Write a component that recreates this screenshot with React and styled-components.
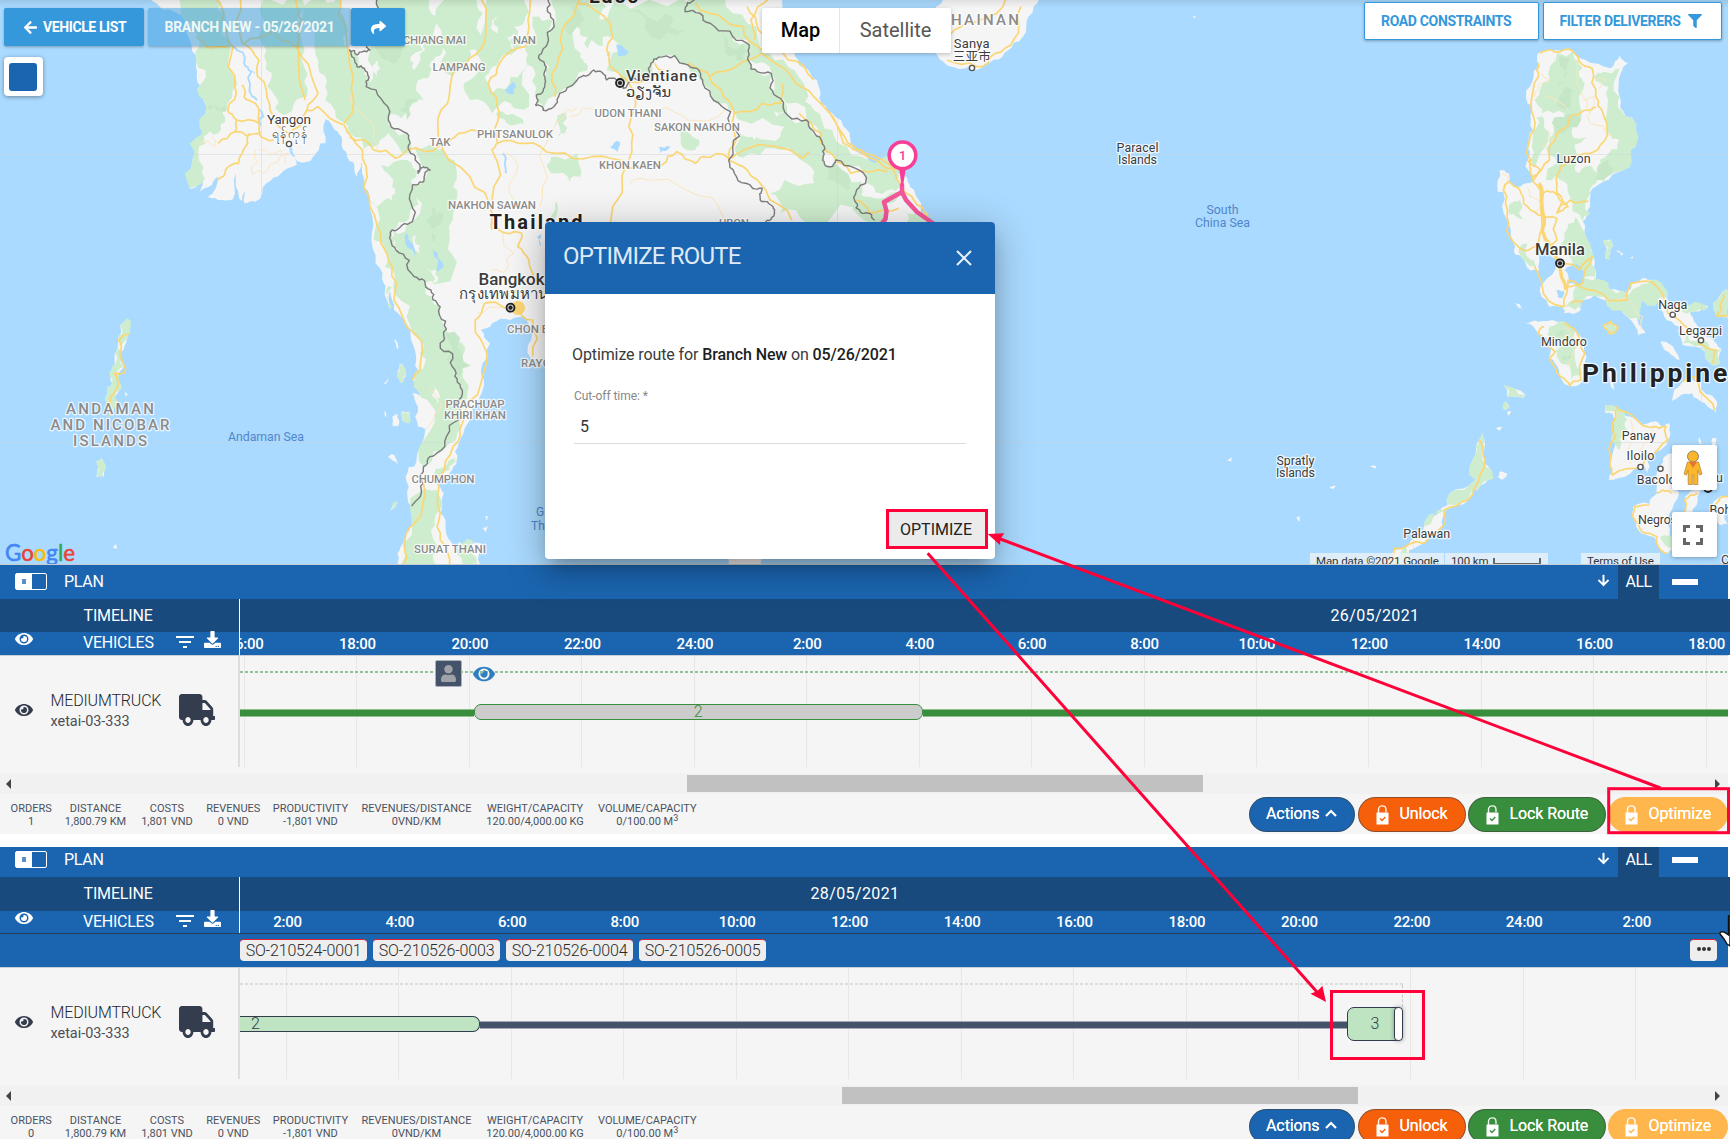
import React from "react";
import styled, { createGlobalStyle, css } from "styled-components";
import { FaArrowLeft, FaArrowDown, FaShare, FaFilter, FaEye, FaTruck, FaDownload, FaUser } from "react-icons/fa";
import { MdFilterList } from "react-icons/md";

const GlobalStyle = createGlobalStyle`
  * { box-sizing: border-box; }
  html, body { margin: 0; padding: 0; overflow: hidden; }
  body { font-family: Roboto, "Noto Sans", "Liberation Sans", sans-serif; color: #333c4b; background: #fff; }
  svg { display: block; flex: none; }
`;

/* ---------- map geometry ---------- */

const KX = 1 / 2.7034;
const KY = 1 / 3;

function hash(a, b) {
  const s = Math.sin(a * 12.9898 + b * 78.233) * 43758.5453;
  return s - Math.floor(s) - 0.5;
}

function roughen(pts, amp, depth) {
  let out = pts;
  for (let d = 0; d < depth; d++) {
    const next = [];
    for (let i = 0; i < out.length - 1; i++) {
      const [x1, y1] = out[i];
      const [x2, y2] = out[i + 1];
      const dx = x2 - x1;
      const dy = y2 - y1;
      const k = hash(x1 + y2, y1 + x2) * amp;
      next.push(out[i], [(x1 + x2) / 2 - dy * k, (y1 + y2) / 2 + dx * k]);
    }
    next.push(out[out.length - 1]);
    out = next;
  }
  return out;
}

function trace(str, amp = 0.35, depth = 2, closed = false, ox = 0, oy = 0) {
  const n = str.trim().split(/[\s,]+/).map(Number);
  const pts = [];
  for (let i = 0; i < n.length; i += 2) pts.push([(n[i] + ox) * KX, (n[i + 1] + oy) * KY]);
  if (closed) pts.push(pts[0]);
  return "M" + roughen(pts, amp, depth).map((p) => p[0].toFixed(1) + " " + p[1].toFixed(1)).join("L") + (closed ? "Z" : "");
}

const E = 3109;
const LAND = [
  ["405,-10 440,30 500,60 518,135 530,200 545,260 558,320 548,390 535,440 520,480 512,565 535,555 560,520 575,505 540,575 565,560 590,530 562,590 600,600 630,598 638,520 646,595 655,603 666,560 660,608 690,605 720,550 760,520 802,495 790,460 785,440 800,478 815,488 840,482 862,450 866,430 880,430 880,358 905,390 925,420 938,470 950,485 978,490 985,550 998,600 1005,700 1015,790 1040,855 1060,900 1085,950 1110,1010 1125,1070 1135,1120 1115,1140 1150,1160 1150,1190 1115,1180 1130,1220 1130,1280 1150,1290 1140,1340 1120,1400 1105,1400 1105,1460 1115,1520 1110,1580 1090,1630 1075,1660 1075,1720 1310,1720 1300,1630 1240,1625 1245,1670 1225,1640 1205,1590 1190,1540 1200,1480 1180,1450 1215,1420 1235,1380 1240,1330 1265,1270 1290,1210 1305,1170 1300,1110 1325,1030 1300,990 1330,970 1380,960 1420,955 1440,1000 1435,1075 1490,1110 1800,1200 2100,1400 2600,1000 2620,780 2530,680 2490,610 2460,560 2450,530 2400,508 2340,465 2300,430 2290,390 2250,340 2215,295 2208,240 2180,205 2150,170 2110,120 2100,60 2115,-10", 0, 0],
  ["2555,-10 2530,20 2520,60 2510,150 2550,185 2610,205 2640,210 2685,180 2710,170 2740,130 2765,110 2780,50 2810,-10", 0, 0],
  ["1973,1720 1975,1660 2055,1660 2045,1720", 0, 0],
  ["1050,160 1090,150 1130,145 1155,170 1200,190 1245,205 1270,165 1292,190 1272,220 1270,290 1285,350 1302,352 1315,395 1300,450 1280,510 1225,545 1190,580 1190,620 1170,665 1175,700 1195,770 1200,800 1220,870 1290,880 1300,850 1330,835 1360,840 1390,870 1400,900 1430,920 1490,910 1510,920 1460,935 1475,970 1530,1030 1545,1050 1540,1090 1515,1090 1500,1055 1440,1035 1430,980 1390,950 1370,900 1330,900 1310,940 1340,1000 1320,1008 1290,950 1260,900 1200,885 1170,900 1165,930 1120,940 1115,920 1080,920 1058,890 1055,860 1095,810 1100,785 1075,745 1050,760 1052,812 1030,812 1010,770 985,760 980,720 965,660 955,575 940,575 945,510 970,520 970,545 1000,560 1035,545 1015,500 1018,440 1035,390 1033,330 1020,310 1035,240 1050,190", E, 0],
  ["1015,130 1050,125 1100,125 1140,145 1165,170 1180,230 1165,310 1135,318 1105,270 1080,235 1085,200 1050,160", E, 840],
  ["1225,135 1243,123 1265,143 1243,163", E, 840],
  ["1410,365 1440,305 1490,310 1530,360 1530,400 1500,370 1465,340 1430,350", E, 840],
  ["1230,375 1260,380 1300,410 1330,435 1360,425 1385,440 1405,430 1405,470 1380,510 1345,545 1345,580 1335,560 1310,565 1250,600 1240,600 1245,550 1255,470 1250,400 1230,398", E, 840],
  ["1375,560 1390,530 1410,520 1430,560 1430,640 1405,700 1405,760 1410,810 1390,820 1370,790 1360,770 1320,750 1305,710 1305,680 1350,672 1370,640 1365,600", E, 840],
  ["1500,600 1520,600 1480,650 1465,700 1440,710 1445,660 1470,630", E, 840],
  ["1515,690 1540,650 1563,650 1563,735 1540,735", E, 840],
  ["900,460 905,500 905,550 928,595 895,615 860,660 800,690 790,740 740,790 700,810 690,860 635,860 660,810 720,770 780,700 810,640 880,600 880,520 890,480", E, 840],
  ["955,315 1015,345 1010,355 965,350", E, 840],
  ["960,365 972,380 958,390", E, 840],
  ["1545,40 1563,30 1563,115 1530,105", E, 840],
  ["345,115 350,160 340,190 325,215 335,260 320,300 310,350 300,400 290,380 290,340 303,310 300,270 310,220 320,180 325,135", 0, 840],
  ["260,545 275,535 285,560 280,590 260,590", 0, 840],
  ["1380,185 1400,190 1432,240 1410,225", E, 840],
  ["1225,720 1245,718 1250,740 1242,780 1230,770", E, 0],
  ["1260,752 1280,762 1275,768", E, 0],
  ["1295,772 1305,768 1305,776", E, 0],
  ["985,68 1000,72 1008,88 995,82", E, 840],
  ["945,575 965,580 955,598 940,590", E, 840],
  ["933,445 952,440 945,452", E, 840],
  ["965,395 975,392 970,410", E, 840],
  ["208,544 222,532 220,544", E, 840],
  ["485,624 503,617 495,626", E, 840],
  ["595,558 612,560 610,566", E, 840],
  ["396,712 404,706 404,725", E, 840],
  ["115,48 125,50 120,55", E, 0],
  ["1245,260 1260,262 1255,330 1246,320", E, 840],
  ["1520,475 1532,475 1528,500 1520,495", E, 840],
  ["1485,470 1495,490 1485,492", E, 840],
  ["1080,250 1098,285 1085,310 1075,280", 0, 840],
  ["1060,410 1075,400 1075,440 1062,438", 0, 840],
  ["1085,395 1108,395 1105,430 1090,425", 0, 840],
  ["1038,392 1044,400 1042,412", 0, 840],
  ["1035,315 1050,295 1042,312", 0, 840],
  ["1048,530 1060,522 1075,552 1060,540", 0, 840],
  ["1055,690 1075,665 1070,680", 0, 840],
  ["1310,710 1320,708 1316,722", 0, 840],
  ["1305,745 1320,738 1312,760", 0, 840],
  ["305,805 313,792 316,807", 0, 840],
  ["338,335 346,342 340,350", 0, 840],
  ["1048,0 1060,20 1055,100 1046,60", 0, 840],
  ["1068,175 1076,190 1074,208", 0, 840],
  ["955,485 975,488 965,530", 0, 0],
];

const GREEN = [
  ["470,-10 585,-10 612,60 625,140 634,230 615,310 608,350 590,400 550,410 558,430 550,500 530,560 512,565 520,480 548,400 558,320 545,250 530,180 540,130 500,60", 0, 0],
  ["715,-10 815,-10 812,100 822,200 830,290 790,330 768,345 745,290 735,220 720,150", 0, 0],
  ["855,-10 915,-10 935,70 945,150 985,205 990,260 1050,350 1100,400 1110,460 1050,400 1010,440 985,450 945,400 925,365 905,330 880,260 860,200 850,130", 0, 0],
  ["1010,-10 1165,-10 1185,50 1170,105 1195,160 1165,185 1160,230 1130,240 1145,300 1110,320 1090,370 1050,345 990,260 1000,150 1000,60", 0, 0],
  ["1200,0 1285,-10 1305,40 1300,130 1310,170 1270,150 1245,210 1225,230 1190,130", 0, 0],
  ["1320,-10 1425,-10 1420,50 1390,80 1410,140 1350,180 1330,230 1330,280 1380,230 1430,190 1430,320 1380,310 1330,340 1270,300 1255,250 1300,180 1305,90", 0, 0],
  ["1440,50 1495,60 1480,130 1462,180 1473,240 1450,285 1440,200 1420,150", 0, 0],
  ["1500,-10 1555,-10 1570,40 1520,130 1500,230 1520,250 1560,225 1550,260 1470,325 1450,300 1475,210", 0, 0],
  ["1120,440 1175,440 1205,470 1225,560 1240,620 1215,700 1220,760 1190,850 1140,850 1065,740 1060,690 1115,665 1115,555 1145,545 1163,510", 0, 0],
  ["1030,495 1100,480 1125,530 1112,560 1105,660 1060,690 1065,750 1150,860 1190,920 1200,980 1230,1010 1255,1060 1250,1130 1265,1170 1240,1260 1215,1330 1145,1400 1140,1330 1155,1200 1120,1140 1135,1060 1110,980 1065,880 1040,800 1010,720 1000,600 1020,620 1060,600 1060,560", 0, 0],
  ["1130,1480 1180,1470 1190,1530 1165,1590 1190,1640 1180,1700 1080,1700 1115,1570", 0, 0],
  ["1200,1400 1230,1375 1215,1410 1180,1440 1170,1430", 0, 0],
  ["1245,1630 1280,1625 1290,1690 1250,1690", 0, 0],
  ["1340,340 1400,350 1420,380 1370,370", 0, 0],
  ["1470,-10 1620,-10 1640,20 1620,60 1650,80 1640,130 1600,120 1590,200 1560,230 1520,270 1480,310 1485,200 1500,70", 0, 0],
  ["1660,-10 1850,-10 1900,60 1960,90 2020,130 2025,185 2085,220 2110,295 2180,360 2215,410 2225,470 2245,500 2260,480 2330,545 2310,600 2330,640 2365,670 2180,670 2110,640 2080,580 2120,540 2200,550 2180,490 2110,450 2030,460 1990,460 2000,400 2080,420 2120,380 2000,360 1980,330 1960,310 1900,250 1860,195 1780,172 1730,230 1690,250 1640,210 1660,120 1620,60", 0, 0],
  ["1870,-10 1960,-10 2020,70 2060,160 2130,200 2180,270 2200,330 2250,390 2290,440 2330,470 2430,530 2440,560 2400,570 2345,550 2270,480 2225,460 2215,400 2180,350 2110,290 2085,220 2025,180 2020,120 1930,80 1855,35", 0, 0],
  ["2320,560 2350,590 2430,575 2390,610 2390,670 2360,670 2310,600", 0, 0],
  ["2450,640 2500,630 2530,670 2450,670", 0, 0],
  ["1490,470 1560,460 1570,530 1540,545 1490,520", 0, 0],
  ["1508,345 1530,340 1528,400 1508,410", 0, 0],
  ["1500,610 1505,605 1500,670 1485,670", 0, 0],
  ["1830,390 1890,420 1880,450 1840,430", 0, 0],
  ["1100,160 1145,150 1155,180 1160,230 1175,250 1165,330 1140,400 1180,410 1150,480 1160,520 1195,500 1210,540 1190,580 1190,640 1170,665 1135,590 1120,545 1070,540 1100,490 1080,430 1090,380 1120,340 1060,340 1040,300 1080,240", E, 0],
  ["1225,215 1270,205 1270,290 1285,350 1302,352 1315,395 1300,450 1280,510 1225,545 1210,510 1240,460 1268,420 1240,400 1235,340 1240,260 1200,230", E, 0],
  ["1045,350 1065,360 1070,440 1040,500 1035,420", E, 0],
  ["975,610 1000,600 1020,670 990,650 970,640", E, 0],
  ["1120,700 1150,650 1175,700 1200,770 1200,800 1220,870 1180,830 1130,760", E, 0],
  ["1000,740 1030,710 1030,780 1045,800 1020,790", E, 0],
  ["1180,-5 1240,10 1260,40 1320,20 1370,0 1400,50 1330,60 1330,130 1290,110 1230,50 1170,60 1150,90 1120,85 1150,20", E, 840],
  ["1430,80 1490,70 1510,82 1460,95", E, 840],
  ["1440,150 1490,180 1545,210 1540,250 1515,250 1500,215 1440,190", E, 840],
  ["1080,140 1120,125 1145,170 1165,190 1170,280 1140,300 1100,230 1110,200 1080,170", E, 840],
  ["1225,135 1243,123 1265,143 1243,163", E, 840],
  ["1230,375 1262,385 1290,420 1290,450 1270,510 1262,500 1262,400 1230,398", E, 840],
  ["900,460 905,500 905,550 928,595 895,615 860,660 800,690 740,740 720,770 780,700 810,640 880,600 880,520 890,480", E, 840],
  ["640,860 690,800 700,830 690,860", E, 840],
  ["955,315 1015,345 1010,355 965,350", E, 840],
  ["960,365 972,380 958,390", E, 840],
  ["1545,40 1563,30 1563,115 1530,105", E, 840],
  ["1380,770 1405,765 1410,800 1390,790", E, 840],
  ["345,115 350,160 335,185 322,205 335,260 320,300 310,350 300,400 290,380 290,340 303,310 300,270 310,220 320,180 325,135", 0, 840],
  ["260,545 275,535 285,560 280,590 260,590", 0, 840],
  ["1225,720 1245,718 1250,740 1242,780 1230,770", E, 0],
  ["1080,250 1098,285 1085,310 1075,280", 0, 840],
  ["1085,395 1108,395 1105,430 1090,425", 0, 840],
  ["1055,690 1075,665 1070,680", 0, 840],
  ["1048,20 1060,20 1055,100 1046,60", 0, 840],
];

const SHADE = [
  ["562,315 612,318 605,335 570,330", 0, 0],
  ["1030,60 1080,90 1070,190 1030,170", 0, 0],
  ["1095,300 1130,300 1100,360", 0, 0],
  ["1165,620 1200,640 1195,740 1170,700", 0, 0],
  ["1205,1000 1250,1060 1245,1130 1205,1080", 0, 0],
  ["1700,30 1800,40 1850,90 1760,110", 0, 0],
  ["1950,100 2010,130 2010,180 1960,160", 0, 0],
  ["2240,500 2300,540 2290,570 2230,540", 0, 0],
  ["1540,20 1580,60 1560,120 1530,80", 0, 0],
  ["1105,170 1135,180 1120,240 1095,260", E, 0],
  ["1115,280 1150,270 1140,310 1105,320", E, 0],
  ["1110,350 1150,340 1120,400 1095,400", E, 0],
  ["1210,500 1240,480 1250,500 1205,540", E, 0],
  ["1100,160 1120,158 1118,168 1100,170", E, 840],
  ["1115,230 1140,225 1135,240 1118,240", E, 840],
];

const CLEARINGS = [
  ["640,60 650,60 660,130 645,120", 0, 0],
  ["1070,70 1080,85 1078,130 1065,110", 0, 0],
  ["1110,170 1140,110 1150,150 1120,210", 0, 0],
  ["1310,230 1345,190 1340,230 1310,270", 0, 0],
  ["1330,60 1350,50 1345,100", 0, 0],
  ["1370,110 1390,90 1385,150", 0, 0],
  ["1015,190 1022,180 1020,230", 0, 0],
  ["1560,80 1590,110 1590,190 1570,160", 0, 0],
  ["1630,110 1660,120 1650,180 1630,200", 0, 0],
  ["1590,200 1610,160 1600,260", 0, 0],
  ["2010,390 2060,400 2040,420 2000,410", 0, 0],
  ["2090,335 2120,335 2100,350", 0, 0],
  ["2140,490 2190,500 2150,540", 0, 0],
  ["1170,1150 1190,1190 1180,1220", 0, 0],
  ["1120,720 1130,700 1135,760", 0, 0],
  ["1150,800 1180,810 1170,850", 0, 0],
];

const LAKES = [
  ["1365,270 1385,245 1390,280", 0, 0],
  ["1100,700 1115,730 1120,770 1100,740", 0, 0],
  ["1170,750 1200,800 1180,815", 0, 0],
  ["1450,710 1462,700 1462,740", 0, 0],
  ["1660,120 1700,155 1670,170", 0, 0],
  ["1650,440 1675,425 1670,455", 0, 0],
  ["1780,440 1812,440 1785,460", 0, 0],
  ["1120,810 1165,800 1175,840 1130,850", E, 0],
  ["1100,870 1118,872 1115,893 1102,890", E, 0],
  ["680,210 690,215 688,230", 0, 0],
];

const RIVERS = ["632,140 660,190 680,215 682,290 695,300", "700,330 712,350 700,380", "785,440 795,470", "1360,460 1368,520"];

const ROADS = [
  ["580,-5 600,60 630,140 635,260 615,330 640,360 700,370 705,400", 0, 0],
  ["640,360 635,395 590,430", 0, 0],
  ["635,395 700,400 740,420", 0, 0],
  ["655,255 660,290 690,310 700,370", 0, 0],
  ["530,110 570,145 620,135", 0, 0],
  ["650,-5 655,130 700,180 720,270 740,350 790,400", 0, 0],
  ["790,390 830,330 860,320 930,375 950,410 990,500 1000,620 1030,730 1060,800 1065,900 1120,1000 1135,1110 1115,1140", 0, 0],
  ["800,0 815,60 815,170 860,280 830,330", 0, 0],
  ["815,60 825,300", 0, 0],
  ["660,130 740,90 800,140", 0, 0],
  ["590,540 610,510 645,490 670,430 675,400", 0, 0],
  ["920,-5 935,90 955,230 930,370", 0, 0],
  ["1300,-5 1310,130 1260,190 1220,240 1210,310 1185,410 1270,530 1330,640 1330,690", 0, 0],
  ["1435,-5 1430,80 1420,140 1350,190 1320,250 1350,340 1345,430", 0, 0],
  ["945,410 1010,450 1070,475 1100,450 1190,435 1240,400 1310,400", 0, 0],
  ["1345,430 1420,430 1500,460 1600,470 1700,505 1790,495 1830,455 1880,490 1900,470 1970,475 2010,450 2170,475 2190,455", 0, 0],
  ["1345,430 1330,450 1330,600", 0, 0],
  ["1565,0 1520,90 1505,200 1500,290", 0, 0],
  ["1560,10 1650,70 1640,150 1660,210 1700,250 1700,380 1700,480 1650,670", 0, 0],
  ["1770,190 1790,210 1700,245", 0, 0],
  ["1860,190 1950,270 1985,340 1990,420 1970,480 2020,510 2070,570 2140,660", 0, 0],
  ["1985,340 2060,310 2110,310 2115,250", 0, 0],
  ["1920,230 1990,200 2060,160 2140,230 2200,290 2280,430 2340,460 2420,520 2440,560 2470,600 2510,650", 0, 0],
  ["1880,10 1960,60 2010,80 2060,150", 0, 0],
  ["2020,20 2050,90 2130,180 2200,240", 0, 0],
  ["2080,-5 2030,60 2040,120", 0, 0],
  ["2220,310 2260,370 2310,440 2390,500 2430,510", 0, 0],
  ["2160,340 2220,400 2230,450 2300,520 2400,515", 0, 0],
  ["2310,600 2350,640 2430,625", 0, 0],
  ["1330,670 1370,700 1410,700 1400,740 1430,780 1440,840", 0, 0],
  ["1400,870 1390,880", 0, 0],
  ["1365,925 1310,910 1285,960 1305,1030 1300,1150 1250,1270 1225,1340 1190,1430 1190,1540 1190,1620 1215,1700", 0, 0],
  ["1390,920 1440,960 1440,1070", 0, 0],
  ["1145,1450 1120,1570 1095,1640 1090,1700", 0, 0],
  ["2510,150 2580,90 2650,60 2720,-5", 0, 0],
  ["2560,180 2640,200 2690,160 2740,120 2760,20", 0, 0],
  ["1054,160 1085,150 1130,147 1160,185 1195,205 1205,290 1225,340 1235,385 1210,450 1160,465 1110,500 1100,550 1115,600 1100,640", E, 0],
  ["1050,190 1050,230 1030,310 1038,390 1018,460 1035,540 1055,570 1060,690 1040,740 1010,750 985,730 965,650 955,570 970,545 1000,570", E, 0],
  ["1205,320 1140,345 1100,400 1080,480 1030,530", E, 0],
  ["1000,570 1010,610 1050,645 1100,655 1100,720 1080,740", E, 0],
  ["1060,580 1090,575 1130,620 1100,640 1135,600 1185,605", E, 0],
  ["1020,480 1055,510 1035,540", E, 0],
  ["1115,790 1160,810 1195,770 1170,850 1130,860", E, 0],
  ["1040,-40 1060,20 1070,50 1120,80 1130,0 1200,30 1290,60 1300,10 1370,20 1400,100 1430,120 1480,170", E, 840],
  ["1140,70 1170,65", E, 840],
  ["1065,140 1050,160 1095,215 1080,235 1110,290 1135,318 1165,300 1175,220 1150,150 1120,130", E, 840],
  ["1225,135 1243,123 1265,143 1243,163 1225,135", E, 840],
  ["1260,380 1265,390 1330,435 1360,440 1395,440 1400,480 1350,530 1330,560 1250,585 1243,550 1258,470 1258,390", E, 840],
  ["890,480 905,540 880,620 860,660 795,690 790,740 740,790 660,805 640,850", E, 840],
  ["1370,640 1385,630 1410,640", E, 840],
  ["1350,675 1310,680 1305,710 1330,755 1370,770 1380,810 1400,820", E, 840],
  ["1480,640 1445,660 1440,700", E, 840],
  ["1440,305 1470,290 1520,370 1525,390", E, 840],
  ["1480,190 1530,210 1520,250", E, 840],
  ["1550,40 1545,90 1530,108 1563,105", E, 840],
  ["1515,690 1540,655 1563,650", E, 840],
  ["350,160 320,180 325,230 338,278 310,280 318,300 300,350 295,410", 0, 840],
];

const TRAILS = [
  ["690,450 680,520 710,520 740,490 780,460", 0, 0],
  ["700,450 760,450 770,490", 0, 0],
  ["950,280 985,350 1010,380 1020,450", 0, 0],
  ["1370,460 1395,520 1390,600", 0, 0],
  ["1460,620 1470,500 1500,380 1530,330 1560,325", 0, 0],
  ["1700,555 1770,540 1900,590 1960,660", 0, 0],
  ["1540,350 1620,330", 0, 0],
  ["1780,330 1860,360 1960,330", 0, 0],
  ["1360,700 1390,760 1370,810 1330,810", 0, 0],
  ["1290,940 1360,920", 0, 0],
  ["1160,1160 1190,1230 1150,1290", 0, 0],
  ["540,430 580,440 575,410", 0, 0],
  ["1060,220 1080,240 1050,260 1040,290", E, 0],
  ["1150,180 1155,230 1180,300 1190,340", E, 0],
  ["1070,290 1130,330", E, 0],
  ["1170,300 1200,290 1190,370 1250,410", E, 0],
  ["1200,240 1230,240 1215,265", E, 0],
  ["1020,560 1050,600 1040,640", E, 0],
  ["950,520 970,530 955,560", E, 0],
  ["1075,390 1090,420 1060,440", E, 0],
  ["1120,140 1150,200 1130,260", E, 840],
  ["1260,60 1310,80 1330,150", E, 840],
  ["1300,420 1300,550", E, 840],
  ["1360,450 1320,540", E, 840],
];

const BORDERS = [
  "1020,-5 1005,60 1000,150 965,165 945,150 965,200 985,205 990,260 1050,350 1100,400 1110,460 1130,520 1145,500 1163,510 1145,545 1115,555 1115,665 1060,690 1070,750 1120,830 1165,870 1190,920 1200,1010 1190,1030 1230,1110 1250,1180 1240,1260 1180,1360 1145,1400 1143,1450 1113,1518",
  "1480,-5 1497,70 1480,130 1460,180 1475,210 1473,250 1450,285 1448,315 1468,330 1510,290 1560,240 1605,210 1640,240 1685,265 1730,240 1760,190 1780,172 1860,195 1900,250 1975,335 1970,480 2015,550 2060,565 2055,600 2090,620 2085,655 2070,670",
  "1880,-5 1852,35 1920,70 2020,130 2025,185 2085,220 2110,295 2180,360 2215,410 2225,470 2245,500 2260,480 2340,550 2310,600 2330,640 2365,660",
];

const lines = (list, amp) => list.map(([p, ox, oy]) => trace(p, amp, 2, false, ox, oy)).join("");

function Areas({ list, amp, fill }) {
  return (
    <g fill={fill}>
      {list.map(([p, ox, oy], i) => (
        <path key={i} d={trace(p, amp, 2, true, ox, oy)} />
      ))}
    </g>
  );
}

/* x, y (vertical middle), text, size, colour, weight, anchor, text length */
const GREY = "#8b8b8b";
const DARK = "#3c3c3c";
const SEA = "#5285c9";
const LABELS = [
  [403, 39.5, "CHIANG MAI", 11.5, GREY, 500, "start", 63],
  [524.5, 40.3, "NAN", 11.5, GREY, 500, "middle", 23],
  [459, 66.7, "LAMPANG", 11.5, GREY, 500, "middle", 53],
  [440, 142, "TAK", 11.5, GREY, 500, "middle", 21],
  [515, 133.5, "PHITSANULOK", 11.5, GREY, 500, "middle", 76],
  [492, 205.3, "NAKHON SAWAN", 11.5, GREY, 500, "middle", 88],
  [489.5, 222, "Thailand", 20, "#222", 700, "start", 93],
  [478.5, 278.5, "Bangkok", 17, DARK, 500, "start", 66],
  [459, 294, "กรุงเทพมหานคร", 15, DARK, 400, "start", 108],
  [507, 328.5, "CHON BURI", 11.5, GREY, 500, "start", 60],
  [521, 362.5, "RAYONG", 11.5, GREY, 500, "start", 46],
  [475, 403.5, "PRACHUAP", 11.5, GREY, 500, "middle", 59],
  [475, 415, "KHIRI KHAN", 11.5, GREY, 500, "middle", 62],
  [443, 478.5, "CHUMPHON", 11.5, GREY, 500, "middle", 63],
  [450, 549, "SURAT THANI", 11.5, GREY, 500, "middle", 72],
  [536, 512, "Gulf of", 12, SEA, 400, "start", 36],
  [531, 526, "Thailand", 12, SEA, 400, "start", 46],
  [110, 408.5, "ANDAMAN", 15, GREY, 500, "middle", 88],
  [110, 424.5, "AND NICOBAR", 15, GREY, 500, "middle", 119],
  [110, 440.5, "ISLANDS", 15, GREY, 500, "middle", 74],
  [266, 437, "Andaman Sea", 12.3, SEA, 400, "middle", 76],
  [289, 119.5, "Yangon", 13.5, DARK, 400, "middle", 44],
  [289, 134, "ရန်ကုန်", 12, DARK, 400, "middle", 34],
  [589, -4, "Laos", 20, "#222", 700, "start", 49],
  [626, 75.5, "Vientiane", 15.5, DARK, 500, "start", 71],
  [626, 92, "ວຽງຈັນ", 14.5, DARK, 400, "start", 45],
  [628, 113, "UDON THANI", 11.5, GREY, 500, "middle", 67],
  [697, 127, "SAKON NAKHON", 11.5, GREY, 500, "middle", 86],
  [630, 165, "KHON KAEN", 11.5, GREY, 500, "middle", 62],
  [719, 223, "UBON", 11.5, GREY, 500, "start", 30],
  [985, 20, "HAINAN", 15, GREY, 500, "middle", 68],
  [971.7, 43.5, "Sanya", 13, DARK, 400, "middle", 36],
  [971.7, 57, "三亚市", 12.5, DARK, 400, "middle", 38],
  [1137.5, 147.5, "Paracel", 12.5, DARK, 400, "middle", 42],
  [1137.5, 160, "Islands", 12.5, DARK, 400, "middle", 39],
  [1222.5, 209.5, "South", 12.3, SEA, 400, "middle", 32],
  [1222.5, 223, "China Sea", 12.3, SEA, 400, "middle", 55],
  [1573.6, 159, "Luzon", 12.5, DARK, 400, "middle", 34],
  [1560, 249.5, "Manila", 16.5, DARK, 500, "middle", 50],
  [1672.7, 305, "Naga", 12.5, DARK, 400, "middle", 29],
  [1700.5, 330.7, "Legazpi", 12.5, DARK, 400, "middle", 43],
  [1564, 342, "Mindoro", 12.5, DARK, 400, "middle", 46],
  [1582, 373, "Philippines", 26.5, "#222", 700, "start", 162],
  [1638.7, 436, "Panay", 12.5, DARK, 400, "middle", 34],
  [1640.5, 456, "Iloilo", 12.5, DARK, 400, "middle", 28],
  [1636.8, 480, "Bacolod", 12.5, DARK, 400, "start", 46],
  [1693, 477, "Cebu", 13, DARK, 400, "start", 30],
  [1638, 520, "Negros", 12.5, DARK, 400, "start", 39],
  [1709.5, 510, "Bohol", 12.5, DARK, 400, "start", 32],
  [1295.4, 460.5, "Spratly", 12.5, DARK, 400, "middle", 38],
  [1295.4, 473, "Islands", 12.5, DARK, 400, "middle", 39],
  [1426.7, 533.5, "Palawan", 12.5, DARK, 400, "middle", 47],
  [1721, 559, "Cagayan", 13, DARK, 400, "start", 50],
];

const TOWNS = [[289, 144], [972, 68], [1672.7, 314.7], [1701, 340.3], [1640.5, 467], [1660.5, 468.7]];
const CAPITALS = [[510.5, 307.7], [620, 83], [1560, 263.3], [1708, 488]];

const MapSvg = styled.svg`
  width: 1728px;
  height: 564px;
  font-family: Roboto, "Noto Sans", "Noto Sans CJK SC", "DejaVu Sans", sans-serif;
`;

function MapCanvas() {
  return (
    <MapSvg viewBox="0 0 1728 564">
      <rect width="1728" height="564" fill="#aadaff" />
      <Areas list={LAND} amp={0.35} fill="#f5f5f5" />
      <Areas list={GREEN} amp={0.6} fill="#ceedce" />
      <Areas list={SHADE} amp={0.8} fill="#c5e6c7" />
      <Areas list={CLEARINGS} amp={0.7} fill="#f5f5f5" />
      <Areas list={LAKES} amp={0.5} fill="#aadaff" />
      <path d="M0 154.500H1728M0 442.500H1728M261.500 0V564M837.500 0V564M1413.500 0V564M1701.500 0V564" stroke="#c8cfd6" strokeOpacity=".4" />
      <g fill="none" strokeLinejoin="round">
        <path d={RIVERS.map((r) => trace(r, 0.5, 2)).join("")} stroke="#aadaff" strokeWidth="1.800" />
        <path d={lines(TRAILS, 0.5)} stroke="#fbe6c0" strokeWidth="1" />
        <path d={lines(ROADS, 0.35)} stroke="#fbd675" strokeWidth="1.700" />
        <path d={trace("1052,550 1060,620 1060,690 1105,790 1125,870", 0.2, 2, false, E)} stroke="#fbd675" strokeWidth="3.500" />
        <path d={BORDERS.map((b) => trace(b, 0.5, 3)).join("")} stroke="#7c7c7c" strokeWidth="1.400" />
      </g>
      <circle cx="518" cy="308" r="7" fill="#fbd675" />
      {TOWNS.map(([x, y]) => (
        <circle key={x} cx={x} cy={y} r="2.600" fill="#fff" stroke="#555" strokeWidth="1.400" />
      ))}
      {CAPITALS.map(([x, y]) => (
        <g key={x}>
          <circle cx={x} cy={y} r="4" fill="#ccc" stroke="#222" strokeWidth="1.800" />
          <circle cx={x} cy={y} r="2.100" fill="#222" />
        </g>
      ))}
      <g paintOrder="stroke" stroke="#ffffff" strokeWidth="2.600" strokeLinejoin="round">
        {LABELS.map(([x, y, t, s, c, w, a, len]) => (
          <text
            key={t + x + y}
            x={x}
            y={y + s * 0.355}
            fontSize={s}
            fill={c}
            fontWeight={w}
            textAnchor={a}
            textLength={len}
            strokeOpacity={c === SEA ? 0 : 0.75}
          >
            {t}
          </text>
        ))}
      </g>
      <g fill="none" stroke="#f4569a" strokeWidth="4.500" strokeLinecap="round" strokeLinejoin="round">
        <path d="M902 185V192L884 202L886.500 211L885.500 219L880 226M902 192L906 200L917 212L934 224" />
      </g>
      <path d="M899 167H906L903 186H901.500Z" fill="#f83f97" />
      <circle cx="902.500" cy="155.300" r="13.300" fill="#fff" stroke="#f83f97" strokeWidth="3.600" />
      <text x="902.500" y="160.300" fontSize="13.500" fontWeight="500" fill="#f83f97" textAnchor="middle">1</text>
      <text x="5" y="561" fontSize="24" fontFamily="Lato, sans-serif" fontWeight="400" textLength="70" lengthAdjust="spacingAndGlyphs">
        <tspan fill="#4285f4" stroke="#4285f4" strokeWidth=".6">G</tspan><tspan fill="#ea4335" stroke="#ea4335" strokeWidth=".6">o</tspan><tspan fill="#fbbc05" stroke="#fbbc05" strokeWidth=".6">o</tspan><tspan fill="#4285f4" stroke="#4285f4" strokeWidth=".6">g</tspan><tspan fill="#34a853" stroke="#34a853" strokeWidth=".6">l</tspan><tspan fill="#ea4335" stroke="#ea4335" strokeWidth=".6">e</tspan>
      </text>
    </MapSvg>
  );
}

/* ---------- map section ---------- */

const Page = styled.div`
  position: relative;
  width: 1730px;
  height: 1139px;
  overflow: hidden;
  background: #fff;
`;

const MapSection = styled.section`
  position: relative;
  width: 1728px;
  height: 565px;
  border-bottom: 1px solid #c9cdd2;
  overflow: hidden;
`;

const TopShade = styled.div`
  position: absolute;
  inset: 0 0 auto 0;
  height: 8px;
  background: linear-gradient(rgba(0, 0, 0, 0.09), transparent);
`;

const Toolbar = styled.div`
  position: absolute;
  display: flex;
  top: ${(p) => p.$top}px;
  left: ${(p) => p.$left}px;
  gap: 4px;
`;

const FilledButton = styled.button`
  display: flex;
  align-items: center;
  justify-content: ${(p) => (p.$center ? "center" : "flex-start")};
  gap: 5px;
  width: ${(p) => p.$w}px;
  height: 38px;
  padding: 0 0 0 ${(p) => p.$pad || 0}px;
  border: 0;
  border-radius: 2px;
  background: ${(p) => (p.$faded ? "rgba(52, 152, 219, 0.5)" : "#3498db")};
  color: ${(p) => (p.$faded ? "#eef8f4" : "#fff")};
  font: 700 14px Roboto, sans-serif;
  letter-spacing: ${(p) => p.$ls || 0}px;
  white-space: nowrap;
  box-shadow: 0 1px 3px rgba(0, 0, 0, 0.3);
`;

const Joined = styled.div`
  display: flex;
`;

const OutlineButton = styled.button`
  display: flex;
  align-items: center;
  gap: 7px;
  width: ${(p) => p.$w}px;
  height: 38px;
  padding: 0 0 0 16px;
  border: 1px solid #3498db;
  border-radius: 2px;
  background: #fff;
  color: #3498db;
  font: 700 14px Roboto, sans-serif;
  letter-spacing: -0.34px;
  white-space: nowrap;
  box-shadow: 0 1px 3px rgba(0, 0, 0, 0.3);
`;

const LayerToggle = styled.div`
  position: absolute;
  top: 57px;
  left: 4px;
  width: 39px;
  height: 39px;
  padding: 6px 5px 5px;
  border-radius: 4px;
  background: #fff;
  box-shadow: 0 1px 4px rgba(0, 0, 0, 0.4);
  &::after {
    content: "";
    display: block;
    width: 28px;
    height: 28px;
    border-radius: 3px;
    background: #1b65b0;
  }
`;

const MapTypes = styled.div`
  position: absolute;
  top: 8px;
  left: 762px;
  display: flex;
  height: 45px;
  background: #fff;
  border-radius: 2px;
  box-shadow: 0 1px 4px rgba(0, 0, 0, 0.25);
`;

const MapType = styled.span`
  width: ${(p) => p.$w}px;
  line-height: 44px;
  text-align: center;
  font-size: 20px;
  font-weight: ${(p) => (p.$on ? 500 : 400)};
  color: ${(p) => (p.$on ? "#000" : "#565656")};
  & + & { border-left: 1px solid #e6e6e6; }
`;

const MapControl = styled.div`
  position: absolute;
  left: 1671.5px;
  top: ${(p) => p.$top}px;
  display: grid;
  place-items: center;
  width: 45px;
  height: 45px;
  padding-right: 2px;
  border-radius: 2px;
  background: #fff;
  box-shadow: 0 1px 4px rgba(0, 0, 0, 0.3);
`;

const Attribution = styled.div`
  position: absolute;
  top: 553px;
  left: 1310px;
  display: flex;
  height: 16px;
  font-size: 11.5px;
  line-height: 17px;
  color: #333;
`;

const Credit = styled.span`
  display: flex;
  gap: 5px;
  width: ${(p) => p.$w}px;
  margin-right: ${(p) => p.$gap || 0}px;
  padding-left: 6px;
  background: rgba(245, 245, 245, 0.7);
  white-space: nowrap;
  letter-spacing: ${(p) => p.$ls || 0}px;
`;

const ScaleBar = styled.i`
  width: 48px;
  height: 7px;
  margin-top: 5px;
  border: 2px solid #666;
  border-top: 0;
`;

/* ---------- dialog ---------- */

const Dialog = styled.div`
  position: absolute;
  z-index: 3;
  top: 222px;
  left: 545px;
  display: flex;
  flex-direction: column;
  width: 450px;
  height: 337px;
  border-radius: 4px;
  background: #fff;
  color: #222;
  box-shadow: 0 11px 15px -7px rgba(0, 0, 0, 0.25), 0 9px 36px 3px rgba(0, 0, 0, 0.27);
`;

const DialogHeader = styled.header`
  display: flex;
  justify-content: space-between;
  align-items: center;
  height: 72px;
  padding: 0 23px 0 18px;
  border-radius: 4px 4px 0 0;
  background: #1b65b0;
  color: #dfeaf6;
  font-size: 24px;
  line-height: 67px;
  letter-spacing: -0.8px;
`;

const DialogTitle = styled.span`
  height: 70px;
`;

const DialogBody = styled.div`
  flex: 1;
  display: flex;
  flex-direction: column;
  padding: 49px 29px 0 27px;
`;

const Sentence = styled.p`
  margin: 0;
  font-size: 16px;
  line-height: 24px;
  white-space: nowrap;
  letter-spacing: -0.11px;
  color: #3a3a3a;
  b { font-weight: 500; color: #1d1d1d; }
`;

const FieldLabel = styled.label`
  margin: 21px 0 0 2px;
  font-size: 12px;
  line-height: 17px;
  letter-spacing: -0.05px;
  color: #888;
`;

const FieldValue = styled.div`
  margin-left: 2px;
  padding: 10px 0 0 6px;
  height: 39px;
  border-bottom: 1px solid #dcdcdc;
  font-size: 16px;
  line-height: 24px;
  color: #333;
`;

const DialogFooter = styled.footer`
  display: flex;
  justify-content: flex-end;
  padding: 0 7px 10px 0;
`;

const DialogAction = styled.button`
  width: 102px;
  height: 40px;
  padding: 0 2px 0 0;
  border: 3px solid #ff0038;
  background: #ebebeb;
  color: #222;
  font: 400 16px Roboto, sans-serif;
`;

/* ---------- plan panel ---------- */

const Panel = styled.section`
  width: 1728px;
  margin-bottom: 13px;
  background: #f5f5f5;
`;

const PlanBar = styled.div`
  display: flex;
  height: ${(p) => p.$h}px;
  padding-left: 15px;
  background: #1b65b0;
  color: #fff;
  font-size: 16px;
  line-height: ${(p) => p.$line}px;
`;

const SplitToggle = styled.div`
  display: flex;
  width: 32px;
  height: 17px;
  margin: ${(p) => p.$mt}px 17px 0 0;
  border: 1px solid #fff;
  border-radius: 2px;
  &::before {
    content: "";
    width: 4px;
    height: 5px;
    border: solid #fff;
    border-width: 5px 6px;
    box-sizing: content-box;
    background: #5b8fc6;
  }
`;

const PlanTitle = styled.span`
  flex: 1;
  letter-spacing: -0.3px;
`;

const PlanTools = styled.div`
  display: flex;
  width: 131px;
`;

const ArrowSlot = styled.span`
  width: 21px;
  padding-top: ${(p) => p.$pt}px;
`;

const AllTab = styled.span`
  width: 41px;
  text-align: center;
  background: #184a7d;
  letter-spacing: -0.6px;
`;

const Minimize = styled.i`
  width: 26px;
  height: 6px;
  margin: ${(p) => p.$mt}px 0 0 13px;
  background: #fff;
`;

const HeaderGrid = styled.div`
  display: grid;
  grid-template-columns: 240px 1fr;
  color: #fff;
`;

const SideHead = styled.div`
  border-right: 1px solid #fff;
`;

const TimelineHead = styled.div`
  height: ${(p) => p.$h}px;
  padding-left: ${(p) => p.$pl}px;
  background: #184a7d;
  font-size: 16px;
  line-height: 33px;
  letter-spacing: ${(p) => p.$ls || 0}px;
`;

const VehiclesHead = styled.div`
  display: flex;
  height: ${(p) => p.$h}px;
  padding-left: 15px;
  background: #1b65b0;
  font-size: 16px;
  line-height: 21px;
  letter-spacing: -0.25px;
`;

const HeadIcon = styled.span`
  width: ${(p) => p.$w}px;
  margin-top: ${(p) => p.$mt}px;
`;

const HeadText = styled.span`
  width: 90px;
`;

const Ruler = styled.div`
  display: flex;
  height: ${(p) => p.$h}px;
  overflow: hidden;
  background: #1b65b0;
  font-size: 15px;
  line-height: ${(p) => p.$line}px;
`;

const Hour = styled.span`
  flex: none;
  width: 112.45px;
  text-align: center;
  font-weight: 500;
  letter-spacing: -0.25px;
  &:first-child { margin-left: ${(p) => p.$shift}px; }
`;

const TagRow = styled.div`
  display: flex;
  gap: 6px;
  height: 34px;
  padding: 5px 11px 0 240px;
  border-top: 1px solid #24405f;
  background: #1b65b0;
`;

const Tag = styled.span`
  width: ${(p) => p.$w}px;
  height: 22px;
  margin-left: ${(p) => (p.$last ? "auto" : 0)};
  border-top: 1px solid #e3222b;
  border-radius: 4px;
  background: #eee;
  color: #2b2b2b;
  text-align: center;
  font-size: 16px;
  font-weight: 300;
  letter-spacing: -0.18px;
  line-height: 21px;
  white-space: nowrap;
`;

const Dots = styled.span`
  display: flex;
  justify-content: center;
  gap: 1px;
  padding-top: 7px;
  i { width: 4px; height: 4px; border-radius: 2px; background: #333; }
`;

const Body = styled.div`
  display: grid;
  grid-template-columns: 240px 1fr;
  height: 118px;
  border-top: 1px solid #ccd0d6;
`;

const VehicleCell = styled.div`
  display: flex;
  height: 111px;
  padding-left: 15px;
  border-right: 2px solid #dedede;
`;

const VehicleName = styled.div`
  width: 128.5px;
  margin: 34px 0 0 17.5px;
  font-size: 16px;
  line-height: 21px;
  font-weight: 300;
  letter-spacing: -0.16px;
  color: #22262d;
  small { display: block; font-size: 14.4px; font-weight: 400; letter-spacing: 0; color: #4b4f57; }
`;

const IconSlot = styled.span`
  margin-top: ${(p) => p.$mt}px;
  color: #333d4d;
`;

const Lane = styled.div`
  position: relative;
  height: 111px;
  overflow: hidden;
`;

const GridLines = styled.div`
  position: absolute;
  inset: 0;
  display: flex;
  padding-left: ${(p) => p.$shift}px;
  i { flex: none; width: 112.45px; border-left: 1px solid #e7e7e7; }
`;

const LaneRows = styled.div`
  position: relative;
  padding-top: 15px;
`;

const Dashes = styled.div`
  height: 2px;
  width: ${(p) => p.$w}px;
  background: repeating-linear-gradient(90deg, ${(p) => p.$c} 0 3px, transparent 3px 5px);
`;

const DropDash = styled.div`
  position: absolute;
  left: 1162px;
  top: 17px;
  height: 22px;
  border-left: 1px dashed #c6c6c6;
`;

const Track = styled.div`
  display: flex;
  align-items: center;
  height: 34px;
  margin-top: 22px;
`;

const Segment = styled.div`
  width: ${(p) => p.$w}px;
  height: 8px;
  margin-top: 2px;
  background: ${(p) => p.$c};
  border: solid ${(p) => p.$edge};
  border-width: 1px 0;
`;

const Stop = styled.div`
  width: ${(p) => p.$w}px;
  height: ${(p) => p.$h}px;
  padding-left: ${(p) => p.$pl || 0}px;
  border: 1px solid ${(p) => p.$line};
  border-radius: 7px;
  background: ${(p) => p.$fill};
  color: ${(p) => p.$text};
  text-align: ${(p) => (p.$pl ? "left" : "center")};
  font-size: 16px;
  font-weight: 300;
  line-height: ${(p) => p.$h - 3}px;
  ${(p) => p.$open && css`border-left: 0; border-radius: 0 7px 7px 0;`}
`;

const Handle = styled.i`
  width: 9px;
  height: 34px;
  margin-left: -9px;
  border: 1px solid #333d4d;
  border-radius: 4px;
  background: #fff;
  box-shadow: 0 0 4px rgba(0, 0, 0, 0.35);
`;

const Badges = styled.div`
  position: absolute;
  top: 4px;
  left: 194.5px;
  display: flex;
  align-items: center;
  gap: 11px;
  color: #2f7fbf;
`;

const Avatar = styled.span`
  display: grid;
  place-items: center;
  width: 27px;
  height: 27px;
  border: 1px solid #a9b0ba;
  border-radius: 2px;
  background: #44526a;
  color: #9fa3a8;
`;

const Scrollbar = styled.div`
  display: flex;
  align-items: center;
  height: 21px;
  padding: 0 8px 0 6px;
  background: #f1f1f1;
`;

const ScrollArrow = styled.i`
  border: 5px solid transparent;
  border-${(p) => p.$side}: 5px solid #444;
  border-${(p) => (p.$side === "left" ? "right" : "left")}: 0;
`;

const Thumb = styled.div`
  width: 516px;
  height: 17px;
  margin: 0 auto 0 ${(p) => p.$ml}px;
  background: #c1c1c1;
`;

const Footer = styled.div`
  display: flex;
  justify-content: space-between;
  height: 40px;
`;

const Stats = styled.div`
  display: grid;
  grid-template-columns: 62.3px 66.4px 76.6px 56px 98.4px 113.6px 123.6px 100.8px;
  padding-top: 8px;
`;

const Stat = styled.div`
  font-size: 11px;
  line-height: 13px;
  text-align: center;
  white-space: nowrap;
  color: #4a5260;
  sup { font-size: 9px; line-height: 0; vertical-align: 4px; }
`;

const Actions = styled.div`
  display: flex;
  gap: 2.5px;
  padding-top: 3px;
`;

const Pill = styled.button`
  display: flex;
  align-items: center;
  justify-content: ${(p) => (p.$start ? "flex-start" : "center")};
  gap: ${(p) => p.$gap}px;
  width: ${(p) => p.$w}px;
  height: 35px;
  padding: 0 0 3px ${(p) => p.$start || 0}px;
  border: 1px solid ${(p) => p.$line || "rgba(60,60,60,.55)"};
  border-radius: 18px;
  background: ${(p) => p.$c};
  color: #fff;
  font: 400 16px Roboto, sans-serif;
  letter-spacing: -0.1px;
  white-space: nowrap;
  text-shadow: 0 0 0.5px #fff;
`;

const PillIcon = styled.svg`
  width: 13px;
  height: 20px;
  margin-top: 3px;
`;

function LockIcon({ tick }) {
  return (
    <PillIcon viewBox="0 0 13 20">
      <path d="M2.500 8V4.500C2.500 -0.300 10 -0.300 10 4.500V7" fill="none" stroke="#fff" strokeWidth="1.400" opacity=".9" />
      <rect x="0.500" y="7.500" width="12" height="12" rx="0.500" fill="#fff" />
      <path d="M4 13.500L6 15.500L9.300 12" fill="none" stroke={tick} strokeWidth="1.400" />
    </PillIcon>
  );
}

const STATS = [
  ["DISTANCE", "1,800.79 KM"],
  ["COSTS", "1,801 VND"],
  ["REVENUES", "0 VND"],
  ["PRODUCTIVITY", "-1,801 VND"],
  ["REVENUES/DISTANCE", "0VND/KM"],
  ["WEIGHT/CAPACITY", "120.00/4,000.00 KG"],
];

function PanelFooter({ orders }) {
  return (
    <Footer>
      <Stats>
        <Stat>ORDERS<br />{orders}</Stat>
        {STATS.map(([k, v]) => (
          <Stat key={k}>{k}<br />{v}</Stat>
        ))}
        <Stat>VOLUME/CAPACITY<br />0/100.00 M<sup>3</sup></Stat>
      </Stats>
      <Actions>
        <Pill $w={106.500} $c="#1b65b0" $gap={6}>
          Actions
          <svg width="12" height="8" viewBox="0 0 12 8"><path d="M1 7L6 2L11 7" fill="none" stroke="#fff" strokeWidth="2.200" /></svg>
        </Pill>
        <Pill $w={108} $c="#f7600a" $start={17} $gap={11}><LockIcon tick="#f7600a" />Unlock</Pill>
        <Pill $w={137.500} $c="#388e3c" $start={16.500} $gap={11}><LockIcon tick="#388e3c" />Lock Route</Pill>
        <Pill $w={120} $c="#ffb64d" $line="#ffb64d" $start={15.500} $gap={11}><LockIcon tick="#ffb64d" />Optimize</Pill>
      </Actions>
    </Footer>
  );
}

function PlanPanel({ barH, barLine, dateH, dateLeft, date, hourH, hourLine, hours, hourShift, lineShift, tags, children, thumb, orders }) {
  return (
    <Panel>
      <PlanBar $h={barH} $line={barLine}>
        <SplitToggle $mt={barLine / 2 - 9} />
        <PlanTitle>PLAN</PlanTitle>
        <PlanTools>
          <ArrowSlot $pt={barLine / 2 - 8}><FaArrowDown size={13} /></ArrowSlot>
          <AllTab>ALL</AllTab>
          <Minimize $mt={barLine / 2 - 3} />
        </PlanTools>
      </PlanBar>
      <HeaderGrid>
        <SideHead>
          <TimelineHead $h={dateH} $pl={83.500} $ls={-0.150}>TIMELINE</TimelineHead>
          <VehiclesHead $h={hourH}>
            <HeadIcon $w={68} $mt={-2}><FaEye size={18} /></HeadIcon>
            <HeadText>VEHICLES</HeadText>
            <HeadIcon $w={31} $mt={-2}><MdFilterList size={24} /></HeadIcon>
            <HeadIcon $w={17} $mt={-1.500}><FaDownload size={17} /></HeadIcon>
          </VehiclesHead>
        </SideHead>
        <div>
          <TimelineHead $h={dateH} $pl={dateLeft} $ls={0.380}>{date}</TimelineHead>
          <Ruler $h={hourH} $line={hourLine}>
            {hours.map((h, i) => (
              <Hour key={i} $shift={hourShift}>{h}</Hour>
            ))}
          </Ruler>
        </div>
      </HeaderGrid>
      {tags && (
        <TagRow>
          {tags.map((t) => (
            <Tag key={t} $w={127}>{t}</Tag>
          ))}
          <Tag $w={27} $last><Dots><i /><i /><i /></Dots></Tag>
        </TagRow>
      )}
      <Body>
        <VehicleCell>
          <IconSlot $mt={45}><FaEye size={18} /></IconSlot>
          <VehicleName>MEDIUMTRUCK<small>xetai-03-333</small></VehicleName>
          <IconSlot $mt={38}><FaTruck width={36} height={32} size={undefined} preserveAspectRatio="none" /></IconSlot>
        </VehicleCell>
        <Lane>
          <GridLines $shift={lineShift}>
            {hours.map((h, i) => <i key={i} />)}
          </GridLines>
          {children}
        </Lane>
      </Body>
      <Scrollbar>
        <ScrollArrow $side="right" />
        <Thumb $ml={thumb} />
        <ScrollArrow $side="left" />
      </Scrollbar>
      <PanelFooter orders={orders} />
    </Panel>
  );
}

const TruckSizing = createGlobalStyle`
  ${IconSlot} svg[preserveAspectRatio] { width: 36px; height: 32px; }
`;

/* ---------- callouts ---------- */

const Callouts = styled.svg`
  position: absolute;
  z-index: 4;
  inset: 0;
  width: 1730px;
  height: 1139px;
  pointer-events: none;
`;

export default function App() {
  return (
    <Page>
      <GlobalStyle />
      <TruckSizing />
      <MapSection>
        <MapCanvas />
        <TopShade />
        <Toolbar $top={8} $left={4}>
          <FilledButton $w={140} $pad={19} $ls={-0.400}><FaArrowLeft size={15} />VEHICLE LIST</FilledButton>
          <Joined>
            <FilledButton $w={203} $pad={16.500} $faded $ls={-0.300}>BRANCH NEW - 05/26/2021</FilledButton>
            <FilledButton $w={54} $center><FaShare size={15} /></FilledButton>
          </Joined>
        </Toolbar>
        <LayerToggle />
        <MapTypes>
          <MapType $w={77} $on>Map</MapType>
          <MapType $w={112}>Satellite</MapType>
        </MapTypes>
        <Toolbar $top={2} $left={1364}>
          <OutlineButton $w={174.500}>ROAD CONSTRAINTS</OutlineButton>
          <OutlineButton $w={179.500}>FILTER DELIVERERS<FaFilter size={14} /></OutlineButton>
        </Toolbar>
        <MapControl $top={445}>
          <svg width="20" height="36" viewBox="0 0 20 36">
            <path d="M4.500 12H15.500L19 24L16.500 25L14.800 20V34.500H10.700V25H9.300V34.500H5.200V20L3.500 25L1 24Z" fill="#fbb62b" stroke="#b98a3a" strokeWidth=".8" />
            <circle cx="10" cy="6.500" r="5.500" fill="#fbb62b" stroke="#6f6f6f" strokeWidth=".8" />
            <path d="M6 12H14L10 18Z" fill="#e8772e" />
          </svg>
        </MapControl>
        <MapControl $top={512}>
          <svg width="20" height="20" viewBox="0 0 20 20" fill="none" stroke="#666" strokeWidth="3">
            <path d="M1.500 7V1.500H7M13 1.500H18.500V7M18.500 13V18.500H13M7 18.500H1.500V13" />
          </svg>
        </MapControl>
        <Attribution>
          <Credit $w={134} $gap={1} $ls={-0.120}>Map data ©2021 Google</Credit>
          <Credit $w={103} $gap={33} $ls={-0.120}>100 km<ScaleBar /></Credit>
          <Credit $w={79} $ls={-0.120}>Terms of Use</Credit>
        </Attribution>
      </MapSection>

      <PlanPanel
        barH={34} barLine={33} dateH={33} dateLeft={1090.500} date="26/05/2021" hourH={23} hourLine={24}
        hours={["16:00", "18:00", "20:00", "22:00", "24:00", "2:00", "4:00", "6:00", "8:00", "10:00", "12:00", "14:00", "16:00", "18:00"]}
        hourShift={-51.200} lineShift={4} thumb={675.500} orders="1"
      >
        <LaneRows>
          <Dashes $w={1487} $c="#92c194" />
          <Track>
            <Segment $w={233.500} $c="#388e3c" $edge="#8dbf8f" />
            <Stop $w={449.500} $h={16} $line="#388e3c" $fill="#ccc" $text="#388e3c">2</Stop>
            <Segment $w={805} $c="#388e3c" $edge="#8dbf8f" />
          </Track>
        </LaneRows>
        <Badges>
          <Avatar><FaUser size={17} /></Avatar>
          <FaEye size={22} />
        </Badges>
      </PlanPanel>

      <PlanPanel
        barH={30} barLine={25} dateH={34} dateLeft={570.500} date="28/05/2021" hourH={22} hourLine={23}
        hours={["2:00", "4:00", "6:00", "8:00", "10:00", "12:00", "14:00", "16:00", "18:00", "20:00", "22:00", "24:00", "2:00", ""]}
        hourShift={-8.800} lineShift={46} thumb={830.500} orders="0"
        tags={["SO-210524-0001", "SO-210526-0003", "SO-210526-0004", "SO-210526-0005"]}
      >
        <LaneRows>
          <Dashes $w={1163} $c="#dcdcdc" />
          <DropDash />
          <Track>
            <Stop $w={240} $h={16} $pl={11} $open $line="#333d4d" $fill="#bfe4c1" $text="#333d4d">2</Stop>
            <Segment $w={867} $c="#44526a" $edge="#a3a9b4" />
            <Stop $w={56} $h={34} $line="#333d4d" $fill="#bfe4c1" $text="#333d4d">3</Stop>
            <Handle />
          </Track>
        </LaneRows>
      </PlanPanel>

      <Dialog>
        <DialogHeader>
          <DialogTitle>OPTIMIZE ROUTE</DialogTitle>
          <svg width="16" height="16" viewBox="0 0 16 16"><path d="M1 1L15 15M15 1L1 15" stroke="#eaf1f9" strokeWidth="2" /></svg>
        </DialogHeader>
        <DialogBody>
          <Sentence>Optimize route for <b>Branch New</b> on <b>05/26/2021</b></Sentence>
          <FieldLabel>Cut-off time: *</FieldLabel>
          <FieldValue>5</FieldValue>
        </DialogBody>
        <DialogFooter>
          <DialogAction>OPTIMIZE</DialogAction>
        </DialogFooter>
      </Dialog>

      <Callouts viewBox="0 0 1730 1139">
        <g fill="none" stroke="#ff0038" strokeWidth="3">
          <rect x="1608.700" y="788.700" width="119.800" height="44" />
          <rect x="1331.500" y="991.500" width="92" height="67" />
          <path d="M1660.500 788L999 538.500M927.700 553.300L1317 992" />
        </g>
        <g fill="#ff0038">
          <path d="M987.700 534L1004.300 533.300L1000.500 538.800L1000 545Z" />
          <path d="M1326 1002L1322.400 985.700L1317.500 991L1310.500 993.700Z" />
        </g>
        <path d="M1730 916H1728.500V935L1724 932C1721 931 1719 933 1720.500 934.500L1724 939L1727 944L1730 946Z" fill="#fff" stroke="#111" strokeWidth="1.400" />
      </Callouts>
    </Page>
  );
}
